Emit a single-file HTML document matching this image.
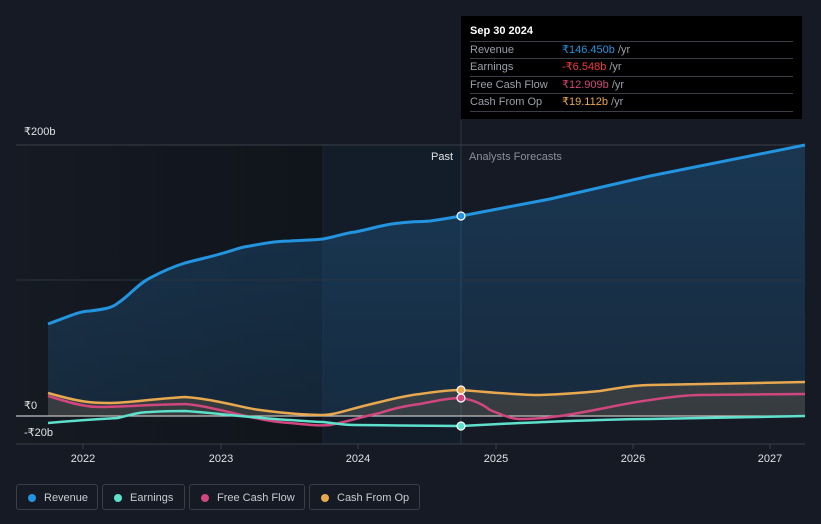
<!DOCTYPE html>
<html><head><style>
body{margin:0;width:821px;height:524px;background:#151a24;font-family:"Liberation Sans",sans-serif;overflow:hidden;position:relative}
.tt{position:absolute;left:461px;top:16px;width:341px;height:103px;background:#000;color:#fff;font-size:11px}
.tt .h{position:absolute;left:9px;top:9px;font-weight:bold}
.row{position:absolute;left:9px;width:323px;height:17px;border-top:1px solid #3a3f47;color:#9aa0a8;line-height:17px}
.row span{position:absolute;left:92px}
.leg{position:absolute;top:484px;height:26px;border:1px solid #3a3f47;border-radius:3px;color:#c8ccd2;font-size:11px;line-height:26px;box-sizing:border-box}
.leg i{position:absolute;left:11px;top:9px;width:8px;height:8px;border-radius:50%}
.leg b{font-weight:normal;position:absolute;left:27px}
</style></head><body>
<svg width="821" height="524" style="position:absolute;left:0;top:0">
<defs><linearGradient id="rg" x1="0" y1="0" x2="0" y2="1"><stop offset="0" stop-color="#1f5a8a" stop-opacity=".45"/><stop offset="1" stop-color="#1f5a8a" stop-opacity=".25"/></linearGradient>
<linearGradient id="pg" x1="0" y1="0" x2="1" y2="0"><stop offset="0" stop-color="#151a23"/><stop offset="1" stop-color="#10141b"/></linearGradient></defs>
<rect x="16" y="145" width="307" height="299" fill="url(#pg)"/>
<rect x="323" y="145" width="138" height="299" fill="#131d29"/>
<line x1="323" y1="145" x2="323" y2="444" stroke="#1c2430"/>
<line x1="461" y1="120" x2="461" y2="444" stroke="#2c3a4a"/>
<line x1="16" y1="145" x2="805" y2="145" stroke="#3a3f47"/>
<path d="M48,324 C70,316 80,311 90,311 C105,309 112,308 118,303 C130,295 138,284 150,278 C165,270 175,266 185,263 C200,259 210,257 220,254 C235,250 240,247 250,246 C270,242 280,241 290,241 C305,240 315,240 323,239 C335,237 345,233 355,232 C375,228 385,224 400,223 C415,221 420,222 430,221 C445,219 455,217 461,216 L550,199 L650,176 L805,145 L805,416 L48,416Z" fill="url(#rg)"/>
<line x1="16" y1="280" x2="805" y2="280" stroke="#2a3440"/>
<path d="M48,324 C70,316 80,311 90,311 C105,309 112,308 118,303 C130,295 138,284 150,278 C165,270 175,266 185,263 C200,259 210,257 220,254 C235,250 240,247 250,246 C270,242 280,241 290,241 C305,240 315,240 323,239 C335,237 345,233 355,232 C375,228 385,224 400,223 C415,221 420,222 430,221 C445,219 455,217 461,216 L550,199 L650,176 L805,145" fill="none" stroke="#2394df" stroke-width="3"/>
<line x1="16" y1="416" x2="805" y2="416" stroke="#c0c4c8" stroke-width="1.2"/>
<path d="M48,393 C80,402 90,403 110,403 C130,403 150,399 185,397 C200,398 210,400 220,402 C240,406 250,409 260,410 C290,414 310,415 323,415 C335,415 345,410 380,402 C400,397 410,395 420,394 C440,391 450,390 461,390 C500,393 520,395 540,395 C570,394 590,392 600,391 C630,386 640,385 650,385 L805,382 L805,416 L48,416Z" fill="#e8a850" fill-opacity=".15"/>
<path d="M48,396 C80,406 90,407 100,407 C120,407 140,405 185,404 C200,405 210,408 220,410 C250,417 270,422 290,423 C310,425 320,426 330,425 C350,421 365,416 380,413 C395,408 405,406 420,404 C440,400 450,398 461,398 C475,400 485,406 490,410 C505,416 512,419 520,419 C540,419 550,417 560,416 C600,410 620,404 650,400 C670,397 690,395 700,395 L805,394" fill="none" stroke="#d0467e" stroke-width="2.5"/>
<path d="M48,423 C80,420 100,419 118,418 C130,415 140,412 150,412 C165,411 175,411 185,411 C200,412 210,413 220,414 C250,417 270,419 290,420 C305,421 315,422 323,422 C340,424 345,425 355,425 L400,425.5 L461,426 C480,425 500,424 520,423 C570,421 610,419 650,419 L805,416" fill="none" stroke="#5ee0cc" stroke-width="2.5"/>
<path d="M48,393 C80,402 90,403 110,403 C130,403 150,399 185,397 C200,398 210,400 220,402 C240,406 250,409 260,410 C290,414 310,415 323,415 C335,415 345,410 380,402 C400,397 410,395 420,394 C440,391 450,390 461,390 C500,393 520,395 540,395 C570,394 590,392 600,391 C630,386 640,385 650,385 L805,382" fill="none" stroke="#e8a850" stroke-width="2.5"/>
<circle cx="461" cy="216" r="4" fill="#2394df" stroke="#fff" stroke-width="1.2"/>
<circle cx="461" cy="390" r="4" fill="#e8a850" stroke="#fff" stroke-width="1.2"/>
<circle cx="461" cy="398" r="4" fill="#d0467e" stroke="#fff" stroke-width="1.2"/>
<circle cx="461" cy="426" r="4" fill="#5ee0cc" stroke="#fff" stroke-width="1.2"/>
<line x1="16" y1="444" x2="805" y2="444" stroke="#3a3f47"/>
<g stroke="#3a3f47"><line x1="83" y1="444" x2="83" y2="449"/><line x1="221" y1="444" x2="221" y2="449"/><line x1="358" y1="444" x2="358" y2="449"/><line x1="496" y1="444" x2="496" y2="449"/><line x1="633" y1="444" x2="633" y2="449"/><line x1="770" y1="444" x2="770" y2="449"/></g>
<g fill="#e0e3e6" font-size="11" text-anchor="middle"><text x="83" y="462">2022</text><text x="221" y="462">2023</text><text x="358" y="462">2024</text><text x="496" y="462">2025</text><text x="633" y="462">2026</text><text x="770" y="462">2027</text></g>
<g fill="#e0e3e6" font-size="11"><text x="24" y="135">₹200b</text><text x="24" y="409">₹0</text><text x="24" y="436">-₹20b</text></g>
<text x="453" y="160" fill="#e0e3e6" font-size="11" text-anchor="end">Past</text>
<text x="469" y="160" fill="#8a9098" font-size="11">Analysts Forecasts</text>
</svg>
<div class="tt"><div class="h">Sep 30 2024</div>
<div class="row" style="top:25px">Revenue<span><font color="#2394df">₹146.450b</font> /yr</span></div>
<div class="row" style="top:42px">Earnings<span><font color="#f03c3c">-₹6.548b</font> /yr</span></div>
<div class="row" style="top:60px">Free Cash Flow<span><font color="#d0467e">₹12.909b</font> /yr</span></div>
<div class="row" style="top:77px;border-bottom:1px solid #3a3f47">Cash From Op<span><font color="#e8a850">₹19.112b</font> /yr</span></div>
</div>
<div class="leg" style="left:16px;width:82px"><i style="background:#2394df"></i><b>Revenue</b></div>
<div class="leg" style="left:102px;width:83px"><i style="background:#5ee0cc"></i><b>Earnings</b></div>
<div class="leg" style="left:189px;width:116px"><i style="background:#d0467e"></i><b>Free Cash Flow</b></div>
<div class="leg" style="left:309px;width:111px"><i style="background:#e8a850"></i><b>Cash From Op</b></div>
</body></html>
